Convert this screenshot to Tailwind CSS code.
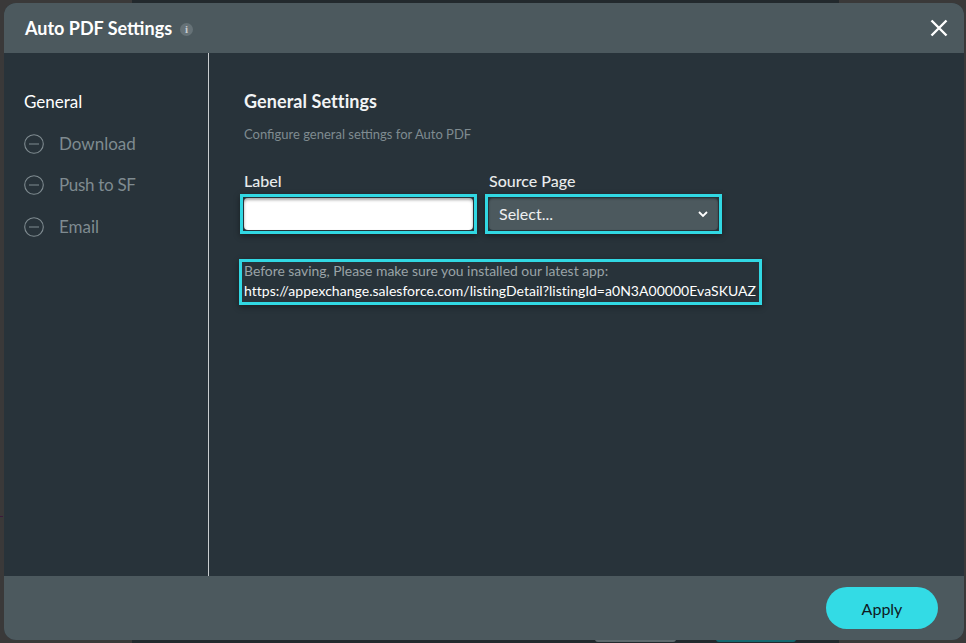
<!DOCTYPE html>
<html>
<head>
<script src="https://cdn.jsdelivr.net/npm/@tailwindcss/browser@4"></script>
</head>
<body class="m-0 bg-[#3a3939] font-['Lato',sans-serif]">
<div class="relative w-[966px] h-[643px] pt-[3px] pb-[3px] pl-[4px] pr-[2px] overflow-hidden bg-[linear-gradient(90deg,#3a3939_132px,#22292d_132px,#22292d_839px,#3a3939_839px)]">
  <div class="absolute left-[595px] top-[638px] w-[81px] h-[4px] rounded-b-[3px] bg-[#5f6a6e]"></div>
  <div class="absolute left-[716px] top-[638px] w-[80px] h-[4px] rounded-b-[3px] bg-[#14686f]"></div>
  <div class="absolute left-0 top-[516px] w-[3px] h-[1px] bg-[#3b1a3a]"></div>
  <div class="relative w-[960px] h-[637px] rounded-[12px] overflow-hidden bg-[#28333a] flex flex-col">
    <header class="h-[50px] shrink-0 bg-[#4c595e] flex items-center pl-[21px] pr-[15px]">
      <h1 class="text-[18px] font-bold leading-none text-white">Auto PDF Settings</h1>
      <span class="ml-[8px] mt-[3px] w-[13px] h-[13px] rounded-full bg-[#667277] flex items-center justify-center text-[11px] font-bold leading-none text-[#c6cccf] font-['Liberation_Serif',serif]">i</span>
      <button class="ml-auto w-[20px] h-[20px] flex items-center justify-center">
        <svg width="18" height="18" viewBox="0 0 18 18" fill="none" stroke="#ffffff" stroke-width="2.4"><path d="M1.5 1.5 16.5 16.5M16.5 1.5 1.5 16.5"/></svg>
      </button>
    </header>
    <div class="flex-1 flex min-h-0">
      <aside class="w-[205px] shrink-0 border-r border-[#c9cdcf] pl-[20px] pt-[38px]">
        <div class="text-[17px] leading-[22px] text-white">General</div>
        <nav class="mt-[20px] flex flex-col gap-[20px] text-[#7f8b90]">
          <div class="flex items-center gap-[15px] h-[21.5px]">
            <svg width="20" height="20" viewBox="0 0 20 20" fill="none" stroke="#7f8b90" stroke-width="1.1"><circle cx="10" cy="10" r="9.3"/><path d="M5 10H15"/></svg>
            <span class="text-[17px] leading-[22px]">Download</span>
          </div>
          <div class="flex items-center gap-[15px] h-[21.5px]">
            <svg width="20" height="20" viewBox="0 0 20 20" fill="none" stroke="#7f8b90" stroke-width="1.1"><circle cx="10" cy="10" r="9.3"/><path d="M5 10H15"/></svg>
            <span class="text-[17px] leading-[22px] tracking-[-0.3px]">Push to SF</span>
          </div>
          <div class="flex items-center gap-[15px] h-[21.5px]">
            <svg width="20" height="20" viewBox="0 0 20 20" fill="none" stroke="#7f8b90" stroke-width="1.1"><circle cx="10" cy="10" r="9.3"/><path d="M5 10H15"/></svg>
            <span class="text-[17px] leading-[22px]">Email</span>
          </div>
        </nav>
      </aside>
      <main class="flex-1 pl-[35px] pt-[37px]">
        <h2 class="text-[18px] font-bold leading-[22px] text-[#f2f4f5] tracking-[0.08px]">General Settings</h2>
        <p class="mt-[13px] text-[13px] leading-[18px] text-[#7f8b90]">Configure general settings for Auto PDF</p>
        <div class="mt-[29px] flex gap-[8px] items-start">
          <div class="-ml-[4px] w-[237px]">
            <label class="block pl-[4px] text-[16px] font-medium leading-[18px] text-[#e8ebec]">Label</label>
            <div class="mt-[4px] h-[40px] border-[3px] border-[#31d8e3] p-[1px] shadow-[0_2px_6px_rgba(0,0,0,0.4)]">
              <input class="block w-full h-full rounded-[4px] bg-white shadow-[inset_0_2px_3px_rgba(0,0,0,0.35)] outline-none" type="text">
            </div>
          </div>
          <div class="w-[237px]">
            <label class="block pl-[4px] text-[16px] font-medium leading-[18px] text-[#e8ebec]">Source Page</label>
            <div class="mt-[4px] h-[40px] border-[3px] border-[#31d8e3] p-[1px] shadow-[0_2px_6px_rgba(0,0,0,0.4)]">
              <div class="h-full rounded-[4px] bg-[#4c595e] flex items-center justify-between pl-[10px] pr-[10px] shadow-[inset_0_1px_2px_rgba(0,0,0,0.3)]">
                <span class="text-[16px] leading-none text-[#eef0f1]">Select...</span>
                <svg width="10" height="7" viewBox="0 0 10 7" fill="none" stroke="#ffffff" stroke-width="1.8"><path d="M1 1 5 5 9 1"/></svg>
              </div>
            </div>
          </div>
        </div>
        <div class="mt-[25px] -ml-[5px] w-[523px] h-[46px] border-[3px] border-[#31d8e3] pl-[2px] shadow-[0_2px_6px_rgba(0,0,0,0.4)]">
          <p class="text-[13.9px] leading-[18px] text-[#9aa3a7] whitespace-nowrap">Before saving, Please make sure you installed our latest app:</p>
          <p class="text-[14px] leading-[22px] text-white whitespace-nowrap tracking-[0.03px]">https://appexchange.salesforce.com/listingDetail?listingId=a0N3A00000EvaSKUAZ</p>
        </div>
      </main>
    </div>
    <footer class="h-[64px] shrink-0 bg-[#4c595e] flex items-center justify-end pr-[26px]">
      <button class="w-[112px] h-[42px] pt-[1px] rounded-full bg-[#33dbe5] text-[16px] text-[#0f1a1f]">Apply</button>
    </footer>
  </div>
</div>
</body>
</html>
